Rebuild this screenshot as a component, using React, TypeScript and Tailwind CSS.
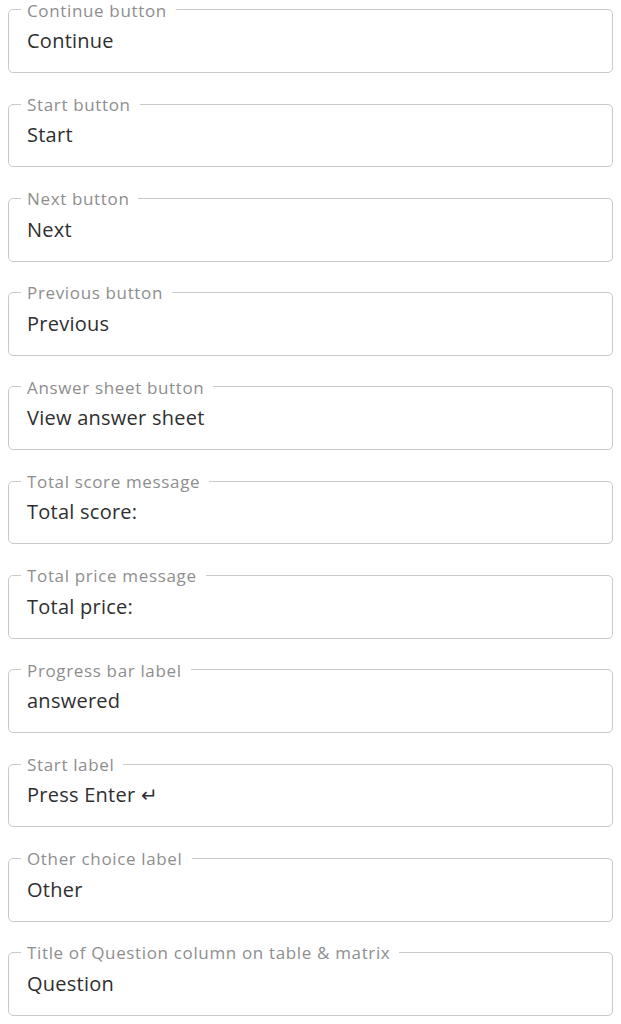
const fields = [
  { label: 'Continue button', value: 'Continue' },
  { label: 'Start button', value: 'Start' },
  { label: 'Next button', value: 'Next' },
  { label: 'Previous button', value: 'Previous' },
  { label: 'Answer sheet button', value: 'View answer sheet' },
  { label: 'Total score message', value: 'Total score:' },
  { label: 'Total price message', value: 'Total price:' },
  { label: 'Progress bar label', value: 'answered' },
  { label: 'Start label', value: 'Press Enter ↵' },
  { label: 'Other choice label', value: 'Other' },
  { label: 'Title of Question column on table & matrix', value: 'Question' },
]

function TextField({ label, value }: { label: string; value: string }) {
  return (
    <fieldset className="mb-[21.3px] h-[73px] rounded-[5px] border border-[#c9c9c9] pl-3 pr-3">
      <legend className="pl-[6px] pr-[9px] pt-[1.5px] text-[17px] leading-[18px] tracking-[0.65px] text-[#8e8e8e]">
        {label}
      </legend>
      <div className="pl-[6px] pt-[9.5px] text-[20px] leading-[24px] tracking-[0.25px] text-[#2f2f2f]">
        {value}
      </div>
    </fieldset>
  )
}

export default function App() {
  return (
    <div className="bg-white px-2 font-['Open_Sans',sans-serif]">
      {fields.map((f) => (
        <TextField key={f.label} label={f.label} value={f.value} />
      ))}
    </div>
  )
}
